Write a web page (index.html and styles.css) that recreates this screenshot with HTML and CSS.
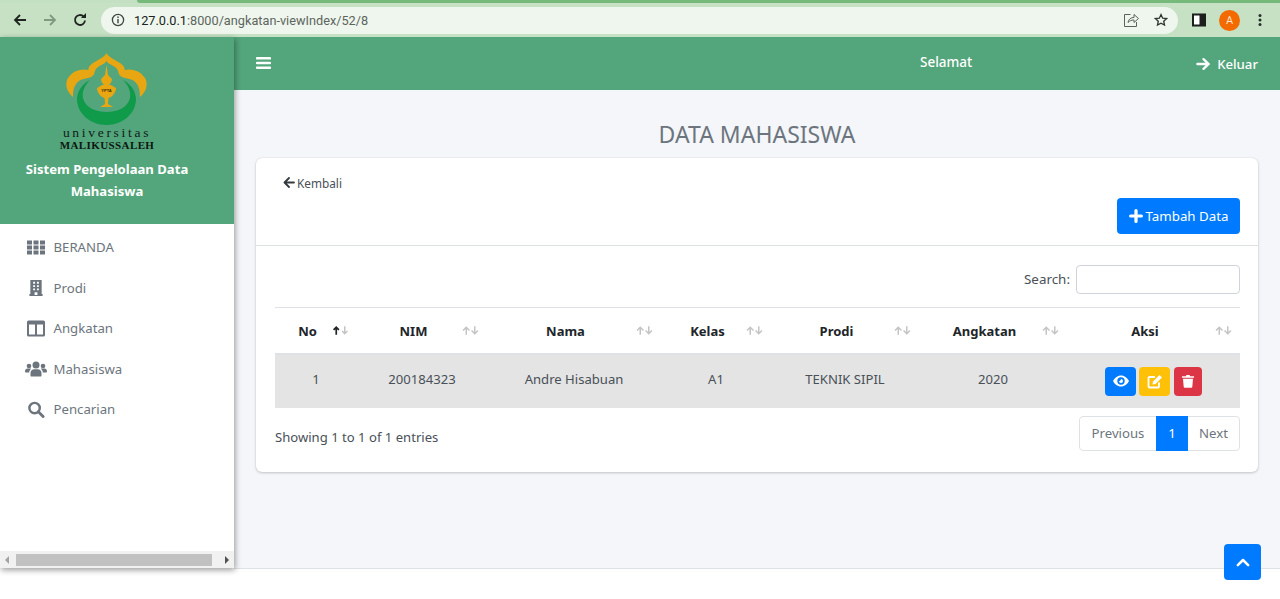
FILE: index.html
```html
<!DOCTYPE html>
<html lang="id">
<head>
<meta charset="utf-8">
<title>Data Mahasiswa</title>
<link rel="stylesheet" href="styles.css">
</head>
<body>
<div class="tabstrip"><div class="tabstrip-active"></div></div>
<header class="chrome">
  <svg class="nav-ic" viewBox="0 0 16 16"><path d="M14 8H3M8 3 3 8l5 5" fill="none" stroke="#202420" stroke-width="1.8"/></svg>
  <svg class="nav-ic" viewBox="0 0 16 16"><path d="M2 8h11M8 3l5 5-5 5" fill="none" stroke="#7f9a80" stroke-width="1.8"/></svg>
  <svg class="nav-ic" viewBox="0 0 16 16"><path d="M13 8.500A5 5 0 1 1 11.600 4.500" fill="none" stroke="#202420" stroke-width="1.8"/><path d="M9 6h5V1z" fill="#202420"/></svg>
  <div class="omnibox">
    <svg class="info-ic" viewBox="0 0 14 14"><circle cx="7" cy="7" r="5.600" fill="none" stroke="#404540" stroke-width="1.3"/><path d="M7 6v4.200M7 3.600v1.300" stroke="#404540" stroke-width="1.4"/></svg>
    <span class="url"><span class="url-host">127.0.0.1</span>:8000/angkatan-viewIndex/52/8</span>
    <svg class="share-ic" viewBox="0 0 16 16"><path d="M7.500 2.500H1.500v12h12V10M5 10.500C5.500 7 8 5.500 11 5.500V2.500L15.500 6.500 11 10.500V8C8.500 8 6.500 8.800 5 10.500Z" fill="none" stroke="#5b625b" stroke-width="1"/></svg>
    <svg class="star-ic" viewBox="0 0 16 16"><path d="m8 1.800 1.900 4.100 4.500.5-3.300 3 .9 4.400L8 11.600l-4 2.200.9-4.400-3.300-3 4.500-.5z" fill="none" stroke="#303530" stroke-width="1.500"/></svg>
  </div>
  <svg class="panel-ic" viewBox="0 0 14 14"><rect x="1" y="1.500" width="12" height="11" fill="#fff" stroke="#1c1f1c" stroke-width="2"/><rect x="7.500" y="1.500" width="5.500" height="11" fill="#1c1f1c"/></svg>
  <div class="avatar">A</div>
  <svg class="dots-ic" viewBox="0 0 4 14"><circle cx="2" cy="2.500" r="1.500"/><circle cx="2" cy="7" r="1.500"/><circle cx="2" cy="11.500" r="1.500"/></svg>
</header>

<div class="app">
  <aside class="sidebar">
    <div class="brand">
      <svg class="logo" viewBox="0 0 81 73">
        <path d="M40.500 1C43 6 50 8 54 11C58 14 59 16 58.500 18C66 16 76 19 80 28C82 35 79 41 74 45C74 38 73 33 68 29C64 26 60 27 56 25C52 23 53 20 51 17C48 13 43 13 40.500 9C38 13 33 13 30 17C28 20 29 23 25 25C21 27 17 26 13 29C8 33 7 38 7 45C2 41 -1 35 1 28C5 19 15 16 22.500 18C22 16 23 14 27 11C31 8 38 6 40.500 1Z" fill="#e7a612"/>
        <path d="M24 28C14 33 11 42 11 47C11 62 25 73 40.500 73C56 73 70 62 70 47C70 42 67 33 57 28C63 34 65 40 64 46C62 55 52 60 40.500 60C29 60 19 55 17 46C16 40 18 34 24 28Z" fill="#0f9b49"/>
        <path d="M40.500 13L42 23L46 27C46 30 44 32 43 33H45L50 36C50 41 46 45 42.500 46L42 52L47 55H34L39 52L38.500 46C35 45 31 41 31 36L36 33H38C37 32 35 30 35 27L39 23Z" fill="#e7a612"/>
        <text class="logo-mark" x="40.500" y="39.500" text-anchor="middle">YPTA</text>
      </svg>
      <div class="logo-univ">universitas</div>
      <div class="logo-name">MALIKUSSALEH</div>
      <div class="brand-title">Sistem Pengelolaan Data Mahasiswa</div>
    </div>
    <nav class="menu">
      <a class="menu-item"><svg class="menu-ic" viewBox="0 0 18 16"><path d="M0 1h5v4H0zM6.500 1h5v4h-5zM13 1h5v4h-5zM0 6h5v4H0zM6.500 6h5v4h-5zM13 6h5v4h-5zM0 11h5v4H0zM6.500 11h5v4h-5zM13 11h5v4h-5z" fill="#6c757d"/></svg><span>BERANDA</span></a>
      <a class="menu-item"><svg class="menu-ic" viewBox="0 0 18 18"><path fill-rule="evenodd" d="M3 1h12v15h1v2H2v-2h1zM6 3v2h2V3zM10 3v2h2V3zM6 6.500v2h2v-2zM10 6.500v2h2v-2zM6 10v2h2v-2zM10 10v2h2v-2zM7.500 14v3h3v-3z" fill="#6c757d"/></svg><span>Prodi</span></a>
      <a class="menu-item"><svg class="menu-ic" viewBox="0 0 18 16"><path fill-rule="evenodd" d="M1.500 0h15A1.500 1.500 0 0 1 18 1.500v13a1.500 1.500 0 0 1-1.500 1.500h-15A1.500 1.500 0 0 1 0 14.500v-13A1.500 1.500 0 0 1 1.500 0zM2 4v10h6V4zM10 4v10h6V4z" fill="#6c757d"/></svg><span>Angkatan</span></a>
      <a class="menu-item"><svg class="menu-ic wide" viewBox="0 0 22 16"><g fill="#6c757d"><circle cx="11" cy="4.500" r="3.500"/><circle cx="4" cy="5.500" r="2.300"/><circle cx="18" cy="5.500" r="2.300"/><path d="M5.500 15v-2.500C5.500 10 7.500 8.800 9 8.800h4c1.500 0 3.500 1.200 3.500 3.700V15c0 .6-.4 1-1 1h-9c-.6 0-1-.4-1-1zM0 11c0-1.800 1.200-3 2.500-3h2.700c.4 0 .7.100 1 .3C5 9.200 4.200 10.500 4.200 12H1c-.6 0-1-.4-1-1zM22 11c0-1.800-1.200-3-2.500-3h-2.700c-.4 0-.7.100-1 .3 1.200.9 2 2.200 2 3.700H21c.6 0 1-.4 1-1z"/></g></svg><span>Mahasiswa</span></a>
      <a class="menu-item"><svg class="menu-ic" viewBox="0 0 18 18"><circle cx="7.500" cy="7.500" r="5.500" fill="none" stroke="#6c757d" stroke-width="2.600"/><path d="M11.500 11.500 16.500 16.500" stroke="#6c757d" stroke-width="3" stroke-linecap="round"/></svg><span>Pencarian</span></a>
    </nav>
    <div class="hscroll">
      <span class="tri tri-left"></span>
      <div class="hscroll-thumb"></div>
      <span class="tri tri-right"></span>
    </div>
  </aside>

  <main class="main">
    <div class="topbar">
      <svg class="burger" viewBox="0 0 15 12"><path d="M1 1.300h13M1 6h13M1 10.700h13" stroke="#fff" stroke-width="2.500" stroke-linecap="round"/></svg>
      <span class="greet">Selamat</span>
      <a class="logout"><svg class="logout-ic" viewBox="0 0 16 14"><path d="M1.500 7h12M8 1.800 13.500 7 8 12.200" fill="none" stroke="#fff" stroke-width="2.500" stroke-linecap="round" stroke-linejoin="round"/></svg>Keluar</a>
    </div>
    <div class="content">
      <h1 class="page-title">DATA MAHASISWA</h1>
      <section class="card">
        <div class="card-head">
          <a class="back"><svg class="back-ic" viewBox="0 0 12 11"><path d="M11 5.500H2M6 1 1.500 5.500 6 10" fill="none" stroke="#343a40" stroke-width="1.800" stroke-linecap="round" stroke-linejoin="round"/></svg>Kembali</a>
          <div class="head-action"><button class="btn-add"><svg class="plus-ic" viewBox="0 0 13 13"><path d="M6.500 1.500v10M1.500 6.500h10" stroke="#fff" stroke-width="3" stroke-linecap="round"/></svg>Tambah Data</button></div>
        </div>
        <div class="card-body">
          <div class="search-row"><label class="search-label">Search:</label><input class="search-input" type="text"></div>
          <table class="tbl">
            <colgroup><col class="c1"><col class="c2"><col class="c3"><col class="c4"><col class="c5"><col class="c6"><col class="c7"></colgroup>
            <thead>
              <tr>
                <th>No<svg class="sort" viewBox="0 0 16 10"><path class="arrow on" d="M4 9V2M1.500 4.500 4 2l2.500 2.500"/><path class="arrow" d="M12 1v7M9.500 5.500 12 8l2.500-2.500"/></svg></th>
                <th>NIM<svg class="sort" viewBox="0 0 16 10"><path class="arrow" d="M4 9V2M1 5l3-3 3 3"/><path class="arrow" d="M12 1v7M9 5l3 3 3-3"/></svg></th>
                <th>Nama<svg class="sort" viewBox="0 0 16 10"><path class="arrow" d="M4 9V2M1 5l3-3 3 3"/><path class="arrow" d="M12 1v7M9 5l3 3 3-3"/></svg></th>
                <th>Kelas<svg class="sort" viewBox="0 0 16 10"><path class="arrow" d="M4 9V2M1 5l3-3 3 3"/><path class="arrow" d="M12 1v7M9 5l3 3 3-3"/></svg></th>
                <th>Prodi<svg class="sort" viewBox="0 0 16 10"><path class="arrow" d="M4 9V2M1 5l3-3 3 3"/><path class="arrow" d="M12 1v7M9 5l3 3 3-3"/></svg></th>
                <th>Angkatan<svg class="sort" viewBox="0 0 16 10"><path class="arrow" d="M4 9V2M1 5l3-3 3 3"/><path class="arrow" d="M12 1v7M9 5l3 3 3-3"/></svg></th>
                <th>Aksi<svg class="sort" viewBox="0 0 16 10"><path class="arrow" d="M4 9V2M1 5l3-3 3 3"/><path class="arrow" d="M12 1v7M9 5l3 3 3-3"/></svg></th>
              </tr>
            </thead>
            <tbody>
              <tr>
                <td>1</td><td>200184323</td><td>Andre Hisabuan</td><td>A1</td><td>TEKNIK SIPIL</td><td>2020</td>
                <td class="td-actions"><div class="actions">
                  <a class="act act-view"><svg viewBox="0 0 16 12" class="act-ic eye"><path fill-rule="evenodd" d="M8 .5C11.500.5 14.500 3 16 6c-1.500 3-4.500 5.500-8 5.500S1.500 9 0 6C1.500 3 4.500.5 8 .5zM8 2.300a3.700 3.700 0 1 0 0 7.400 3.700 3.700 0 0 0 0-7.400zM8 4a2 2 0 1 1-2 2c.8.300 1.800-.8 2-2z" fill="#fff"/></svg></a>
                  <a class="act act-edit"><svg viewBox="0 0 16 15" class="act-ic"><path d="M12 8.500V12.500a1 1 0 0 1-1 1H2.500a1 1 0 0 1-1-1V4a1 1 0 0 1 1-1H8" fill="none" stroke="#fff" stroke-width="1.800"/><path d="M12.500 1 15 3.500 8.500 10 5.500 10.500 6 7.500z" fill="#fff"/></svg></a>
                  <a class="act act-del"><svg viewBox="0 0 12 14" class="act-ic trash"><path d="M0 2.200h3.800L4.500 1h3l.7 1.200H12v1.600H0zM1 4.800h10l-.7 8a1 1 0 0 1-1 1H2.700a1 1 0 0 1-1-1z" fill="#fff"/></svg></a>
                </div></td>
              </tr>
            </tbody>
          </table>
          <div class="tbl-foot">
            <div class="info">Showing 1 to 1 of 1 entries</div>
            <div class="pager"><a class="pg pg-prev">Previous</a><a class="pg pg-cur">1</a><a class="pg pg-next">Next</a></div>
          </div>
        </div>
      </section>
    </div>
  </main>
</div>
<a class="to-top"><svg viewBox="0 0 14 9" class="to-top-ic"><path d="M1.800 7.200 7 2l5.200 5.200" fill="none" stroke="#fff" stroke-width="2.500" stroke-linecap="round" stroke-linejoin="round"/></svg></a>
</body>
</html>
```
FILE: styles.css
```css
* { box-sizing: border-box; }
html, body { margin: 0; padding: 0; height: 599px; overflow: hidden; background: #fff; }
body { font-family: "Noto Sans", "Open Sans", sans-serif; font-size: 14px; color: #495057; position: relative; }

.tabstrip { height: 3px; background: #c4e0c2; }
.tabstrip-active { height: 3px; margin-left: 137px; background: #77b97b; border-radius: 0 0 0 4px; }
.chrome { height: 34px; background: #c6e1c4; display: flex; align-items: center; padding-left: 12px; }
.nav-ic { width: 16px; height: 16px; margin-right: 14px; flex: none; }
.omnibox { margin-left: -1px; margin-right: 14px; width: 1077px; height: 27px; border-radius: 14px; background: #eef6ee; display: flex; align-items: center; padding-left: 10px; color: #5d655d; font-family: "Roboto", sans-serif; font-size: 12.720px; }
.info-ic { width: 14px; height: 14px; margin-right: 9px; }
.url { flex: 1; white-space: nowrap; }
.url-host { color: #202420; }
.share-ic { width: 16px; height: 16px; margin-right: 15px; }
.star-ic { width: 14px; height: 14px; margin-right: 10px; }
.panel-ic { width: 14px; height: 14px; margin-right: 13px; flex: none; }
.avatar { width: 21px; height: 21px; border-radius: 50%; background: #f26a00; color: #fde3d0; font-family: "Roboto", sans-serif; font-size: 11px; display: flex; align-items: center; justify-content: center; flex: none; margin-right: 18px; }
.dots-ic { width: 4px; height: 14px; fill: #2a2e2a; flex: none; }

.app { display: flex; height: 532px; align-items: flex-start; }
.sidebar { width: 234px; height: 531px; flex: none; background: #fff; display: flex; flex-direction: column; box-shadow: 1px 2px 6px rgba(0,0,0,.4); position: relative; z-index: 2; }
.brand { height: 187px; background: #53a57b; display: flex; flex-direction: column; align-items: center; padding: 15px 20px 0 0; }
.logo { width: 81px; height: 73px; flex: none; margin-left: -2px; }
.logo-mark { font-family: "Liberation Sans", sans-serif; font-size: 4px; font-weight: 700; fill: #3d3208; }
.logo-univ { font-family: "Liberation Serif", serif; font-size: 13.500px; letter-spacing: 2.700px; line-height: 12px; margin-top: 2px; color: #10201a; white-space: nowrap; }
.logo-name { font-family: "Liberation Serif", serif; font-weight: 700; font-size: 11px; line-height: 12px; letter-spacing: .4px; color: #0c1712; white-space: nowrap; }
.brand-title { width: 190px; margin-top: 7px; text-align: center; color: #fff; font-weight: 700; font-size: 13.100px; line-height: 22px; }
.menu { flex: 1; padding-top: 3px; }
.menu-item { height: 40.500px; display: flex; align-items: center; padding-left: 27px; color: #6c757d; font-size: 13.200px; }
.menu-item span { margin-left: 8.500px; }
.menu-ic { width: 18px; height: 17px; flex: none; }
.menu-ic.wide { width: 22px; margin-left: -2px; margin-right: -2px; }
.hscroll { height: 17px; background: #f1f1f1; display: flex; align-items: center; padding: 0 5px; }
.hscroll-thumb { width: 196px; height: 12px; margin: 0 auto 0 7px; background: #c1c1c1; }
.tri { width: 0; height: 0; border-top: 4px solid transparent; border-bottom: 4px solid transparent; }
.tri-left { border-right: 4px solid #a3a3a3; }
.tri-right { border-left: 4px solid #505050; }

.main { flex: 1; min-width: 0; height: 532px; display: flex; flex-direction: column; border-bottom: 1px solid #dee2e6; background: #f4f6f9; }
.topbar { height: 53px; background: #53a57b; display: flex; align-items: center; padding-left: 22px; color: #fff; position: relative; flex: none; }
.burger { width: 15px; height: 12px; margin-bottom: 1px; }
.greet { margin-left: 649px; font-size: 13.500px; font-weight: 500; margin-bottom: 4px; }
.logout { margin-left: auto; margin-right: 22px; display: flex; align-items: center; font-size: 13.200px; font-weight: 500; margin-top: 1px; }
.logout-ic { width: 15px; height: 14px; margin-right: 6px; }
.content { flex: 1; padding: 0 22px; }
.page-title { margin: 29px 0 9px; height: 30px; line-height: 30px; text-align: center; font-size: 23px; font-weight: 400; color: #6c757d; }
.card { background: #fff; border-radius: 6px; height: 314px; box-shadow: 0 0 1px rgba(0,0,0,.13), 0 1px 3px rgba(0,0,0,.2); }
.card-head { height: 88px; border-bottom: 1px solid #dee2e6; padding: 16px 18px 0 27px; }
.back { display: flex; align-items: center; height: 17px; font-size: 11.800px; color: #495057; }
.back-ic { width: 12px; height: 11px; margin-right: 2px; }
.head-action { display: flex; justify-content: flex-end; margin-top: 7px; }
.btn-add { width: 123px; height: 36px; border: 0; border-radius: 4px; background: #007bff; color: #fff; font-family: inherit; font-size: 13.300px; display: flex; align-items: center; justify-content: center; padding: 0; }
.plus-ic { width: 14px; height: 14px; margin-right: 3px; }
.card-body { padding: 19px 18px 0 19px; }
.search-row { display: flex; justify-content: flex-end; align-items: flex-start; height: 30px; }
.search-label { font-size: 13.400px; margin-right: 6px; line-height: 29px; }
.search-input { width: 164px; height: 29px; border: 1px solid #ced4da; border-radius: 4px; background: #fff; }
.tbl { width: 965px; table-layout: fixed; border-collapse: collapse; margin-top: 12px; }
.c1 { width: 82px; } .c2 { width: 130px; } .c3 { width: 174px; } .c4 { width: 110px; } .c5 { width: 148px; } .c6 { width: 148px; } .c7 { width: 173px; }
.tbl th { position: relative; height: 46px; padding: 1px 17px 0 0; border-top: 1px solid #dee2e6; border-bottom: 2px solid #dee2e6; color: #212529; font-weight: 700; font-size: 13px; text-align: center; }
.tbl td { height: 54px; padding: 0 0 4px; background: #e4e4e4; text-align: center; font-size: 13.100px; color: #495057; }
.tbl td.td-actions { padding: 0; }
.sort { position: absolute; right: 8px; top: 17px; width: 17px; height: 11px; }
.arrow { fill: none; stroke: #c4c4c4; stroke-width: 1.400; }
.arrow.on { stroke: #212529; stroke-width: 1.600; }
.actions { display: flex; justify-content: center; }
.act { height: 29px; border-radius: 4px; display: flex; align-items: center; justify-content: center; }
.act-view { width: 31px; background: #007bff; }
.act-edit { width: 31px; margin-left: 3px; background: #ffc107; }
.act-del { width: 28px; margin-left: 4px; background: #dc3545; }
.act-ic { width: 16px; height: 15px; }
.act-ic.eye { height: 12px; }
.act-ic.trash { width: 12px; height: 14px; }
.tbl-foot { display: flex; justify-content: space-between; align-items: center; margin-top: 8px; }
.info { font-size: 13.100px; color: #495057; margin-top: 8px; }
.pager { display: flex; height: 35px; border: 1px solid #dee2e6; border-radius: 4px; font-size: 13.200px; color: #6c757d; }
.pg { display: flex; align-items: center; justify-content: center; }
.pg-prev { width: 76px; }
.pg-cur { width: 32px; background: #007bff; color: #fff; margin: -1px 0; }
.pg-next { width: 51px; }

.to-top { position: absolute; left: 1224px; top: 544px; width: 37px; height: 36px; border-radius: 4px; background: #007bff; display: flex; align-items: center; justify-content: center; z-index: 3; }
.to-top-ic { width: 14px; height: 9px; }
```
